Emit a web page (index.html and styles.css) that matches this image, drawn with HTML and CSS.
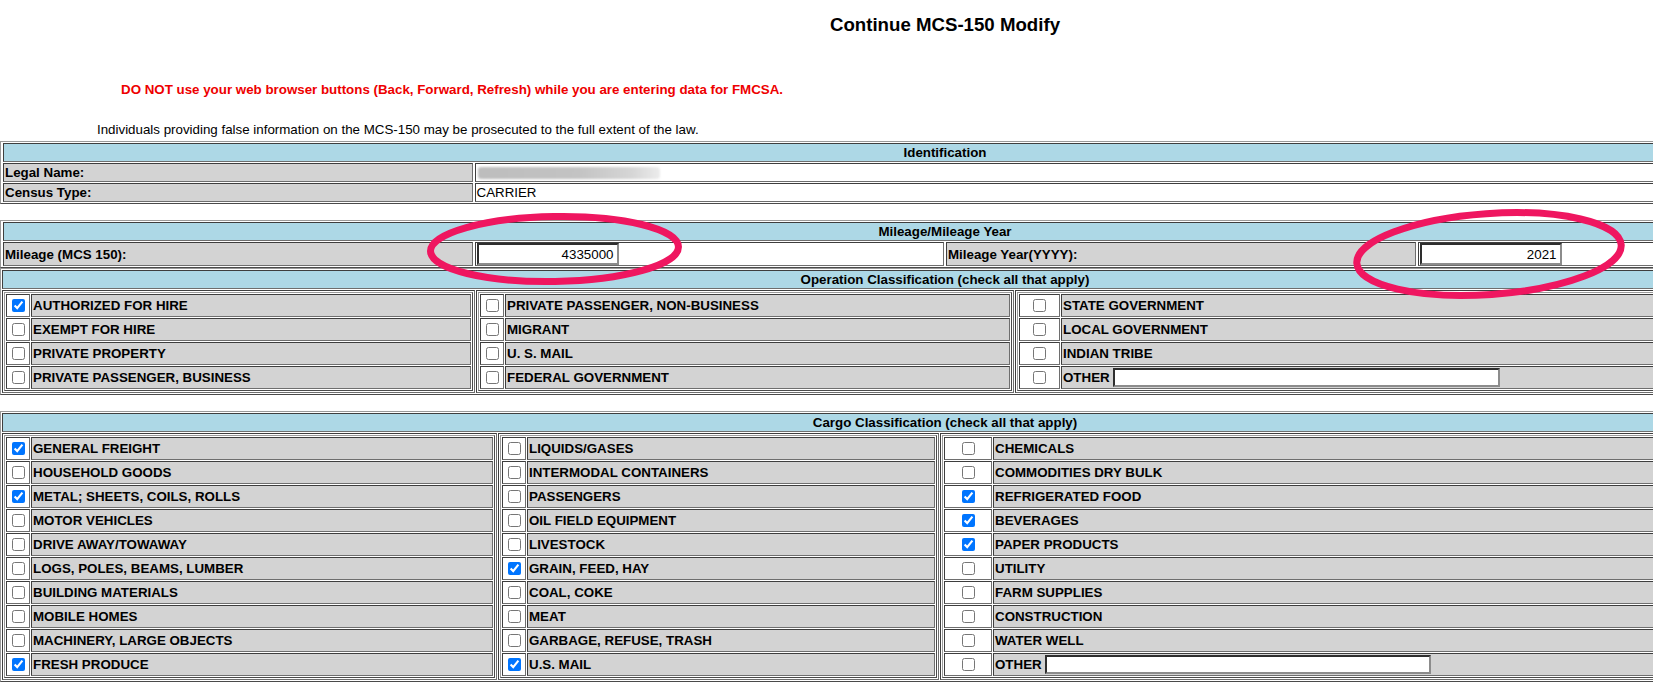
FILE: index.html
```html
<!DOCTYPE html>
<html>
<head>
<meta charset="utf-8">
<title>Continue MCS-150 Modify</title>
<link rel="stylesheet" href="styles.css">
</head>
<body>
<div class="page">
  <div class="title">Continue MCS-150 Modify</div>
  <div class="warn">DO NOT use your web browser buttons (Back, Forward, Refresh) while you are entering data for FMCSA.</div>
  <div class="legal">Individuals providing false information on the MCS-150 may be prosecuted to the full extent of the law.</div>

  <table class="sec four">
    <colgroup><col class="q"><col class="q"><col class="q"><col class="q"></colgroup>
    <tr><th colspan="4" class="hd">Identification</th></tr>
    <tr><td class="lbl">Legal Name:</td><td colspan="3" class="val"><span class="blur"></span></td></tr>
    <tr><td class="lbl">Census Type:</td><td colspan="3" class="val">CARRIER</td></tr>
  </table>

  <table class="sec four gap">
    <colgroup><col class="q"><col class="q"><col class="q"><col class="q"></colgroup>
    <tr><th colspan="4" class="hd">Mileage/Mileage Year</th></tr>
    <tr>
      <td class="lbl">Mileage (MCS 150):</td>
      <td class="val inp"><input class="num" type="text" value="4335000"></td>
      <td class="lbl">Mileage Year(YYYY):</td>
      <td class="val inp"><input class="num" type="text" value="2021"></td>
    </tr>
  </table>

  <table class="sec outer">
    <colgroup><col class="op1"><col class="op2"><col class="op3"></colgroup>
    <tr><th colspan="3" class="hd">Operation Classification (check all that apply)</th></tr>
    <tr>
      <td class="box">
        <table class="list">
          <tr><td class="cb"><input type="checkbox" checked></td><td class="opt">AUTHORIZED FOR HIRE</td></tr>
          <tr><td class="cb"><input type="checkbox"></td><td class="opt">EXEMPT FOR HIRE</td></tr>
          <tr><td class="cb"><input type="checkbox"></td><td class="opt">PRIVATE PROPERTY</td></tr>
          <tr><td class="cb"><input type="checkbox"></td><td class="opt">PRIVATE PASSENGER, BUSINESS</td></tr>
        </table>
      </td>
      <td class="box">
        <table class="list">
          <tr><td class="cb"><input type="checkbox"></td><td class="opt">PRIVATE PASSENGER, NON-BUSINESS</td></tr>
          <tr><td class="cb"><input type="checkbox"></td><td class="opt">MIGRANT</td></tr>
          <tr><td class="cb"><input type="checkbox"></td><td class="opt">U. S. MAIL</td></tr>
          <tr><td class="cb"><input type="checkbox"></td><td class="opt">FEDERAL GOVERNMENT</td></tr>
        </table>
      </td>
      <td class="box">
        <table class="list">
          <tr><td class="cb wide-a"><input type="checkbox"></td><td class="opt">STATE GOVERNMENT</td></tr>
          <tr><td class="cb wide-a"><input type="checkbox"></td><td class="opt">LOCAL GOVERNMENT</td></tr>
          <tr><td class="cb wide-a"><input type="checkbox"></td><td class="opt">INDIAN TRIBE</td></tr>
          <tr><td class="cb wide-a"><input type="checkbox"></td><td class="opt">OTHER <input class="txt op-other" type="text"></td></tr>
        </table>
      </td>
    </tr>
  </table>

  <table class="sec outer gap2">
    <colgroup><col class="cg1"><col class="cg2"><col class="cg3"></colgroup>
    <tr><th colspan="3" class="hd">Cargo Classification (check all that apply)</th></tr>
    <tr>
      <td class="box">
        <table class="list">
          <tr><td class="cb"><input type="checkbox" checked></td><td class="opt">GENERAL FREIGHT</td></tr>
          <tr><td class="cb"><input type="checkbox"></td><td class="opt">HOUSEHOLD GOODS</td></tr>
          <tr><td class="cb"><input type="checkbox" checked></td><td class="opt">METAL; SHEETS, COILS, ROLLS</td></tr>
          <tr><td class="cb"><input type="checkbox"></td><td class="opt">MOTOR VEHICLES</td></tr>
          <tr><td class="cb"><input type="checkbox"></td><td class="opt">DRIVE AWAY/TOWAWAY</td></tr>
          <tr><td class="cb"><input type="checkbox"></td><td class="opt">LOGS, POLES, BEAMS, LUMBER</td></tr>
          <tr><td class="cb"><input type="checkbox"></td><td class="opt">BUILDING MATERIALS</td></tr>
          <tr><td class="cb"><input type="checkbox"></td><td class="opt">MOBILE HOMES</td></tr>
          <tr><td class="cb"><input type="checkbox"></td><td class="opt">MACHINERY, LARGE OBJECTS</td></tr>
          <tr><td class="cb"><input type="checkbox" checked></td><td class="opt">FRESH PRODUCE</td></tr>
        </table>
      </td>
      <td class="box">
        <table class="list">
          <tr><td class="cb"><input type="checkbox"></td><td class="opt">LIQUIDS/GASES</td></tr>
          <tr><td class="cb"><input type="checkbox"></td><td class="opt">INTERMODAL CONTAINERS</td></tr>
          <tr><td class="cb"><input type="checkbox"></td><td class="opt">PASSENGERS</td></tr>
          <tr><td class="cb"><input type="checkbox"></td><td class="opt">OIL FIELD EQUIPMENT</td></tr>
          <tr><td class="cb"><input type="checkbox"></td><td class="opt">LIVESTOCK</td></tr>
          <tr><td class="cb"><input type="checkbox" checked></td><td class="opt">GRAIN, FEED, HAY</td></tr>
          <tr><td class="cb"><input type="checkbox"></td><td class="opt">COAL, COKE</td></tr>
          <tr><td class="cb"><input type="checkbox"></td><td class="opt">MEAT</td></tr>
          <tr><td class="cb"><input type="checkbox"></td><td class="opt">GARBAGE, REFUSE, TRASH</td></tr>
          <tr><td class="cb"><input type="checkbox" checked></td><td class="opt">U.S. MAIL</td></tr>
        </table>
      </td>
      <td class="box">
        <table class="list">
          <tr><td class="cb wide-b"><input type="checkbox"></td><td class="opt">CHEMICALS</td></tr>
          <tr><td class="cb wide-b"><input type="checkbox"></td><td class="opt">COMMODITIES DRY BULK</td></tr>
          <tr><td class="cb wide-b"><input type="checkbox" checked></td><td class="opt">REFRIGERATED FOOD</td></tr>
          <tr><td class="cb wide-b"><input type="checkbox" checked></td><td class="opt">BEVERAGES</td></tr>
          <tr><td class="cb wide-b"><input type="checkbox" checked></td><td class="opt">PAPER PRODUCTS</td></tr>
          <tr><td class="cb wide-b"><input type="checkbox"></td><td class="opt">UTILITY</td></tr>
          <tr><td class="cb wide-b"><input type="checkbox"></td><td class="opt">FARM SUPPLIES</td></tr>
          <tr><td class="cb wide-b"><input type="checkbox"></td><td class="opt">CONSTRUCTION</td></tr>
          <tr><td class="cb wide-b"><input type="checkbox"></td><td class="opt">WATER WELL</td></tr>
          <tr><td class="cb wide-b"><input type="checkbox"></td><td class="opt">OTHER <input class="txt cg-other" type="text"></td></tr>
        </table>
      </td>
    </tr>
  </table>

  <svg class="ring ring-a" width="270" height="90" viewBox="0 0 270 90" aria-hidden="true">
    <ellipse cx="134.5" cy="44" rx="124" ry="32.5" fill="none" stroke="#ef1660" stroke-width="7"/>
  </svg>
  <svg class="ring ring-b" width="300" height="118" viewBox="0 0 300 118" aria-hidden="true">
    <ellipse cx="149" cy="59" rx="132.5" ry="40.5" fill="none" stroke="#ef1660" stroke-width="7"/>
  </svg>
</div>
</body>
</html>
```

FILE: styles.css
```css
html, body {
  margin: 0;
  padding: 0;
  background: #fff;
  overflow: hidden;
}

body {
  font-family: "Liberation Sans", Arial, sans-serif;
  font-size: 13.33px;
  color: #000;
}

.page {
  position: relative;
  width: 1890px;
}

.title {
  padding-top: 14px;
  height: 22px;
  line-height: 22px;
  text-align: center;
  font-size: 18.67px;
  font-weight: bold;
}

.warn {
  margin-top: 46px;
  padding-left: 121px;
  line-height: 16px;
  color: #ee0000;
  font-weight: bold;
}

.legal {
  margin-top: 24px;
  padding-left: 97px;
  line-height: 16px;
}

/* section tables */
.sec {
  width: 1890px;
  table-layout: fixed;
  border-collapse: separate;
  border: 1px solid;
  border-color: #9a9a9a #4a4a4a #4a4a4a #9a9a9a;
  margin-top: 3px;
}

.four {
  border-spacing: 2px 1px;
}

.outer {
  border-spacing: 1px;
  margin-top: 0;
}

.gap {
  margin-top: 16px;
}

.gap2 {
  margin-top: 16px;
}

.q { width: 25%; }
.op1 { width: 473px; }
.op2 { width: 538px; }
.op3 { width: 873px; }
.cg1 { width: 495px; }
.cg2 { width: 441px; }
.cg3 { width: 948px; }

.sec > tbody > tr > th,
.sec > tbody > tr > td {
  border: 1px solid;
  border-color: #3e3e3e #6e6e6e #6e6e6e #3e3e3e;
  padding: 1px;
  line-height: 15px;
}

.hd {
  background: #add8e6;
  font-weight: bold;
  text-align: center;
}

.lbl {
  background: #d3d3d3;
  font-weight: bold;
  white-space: nowrap;
  text-align: left;
}

.val {
  background: #fff;
  white-space: nowrap;
}

.sec > tbody > tr > td.inp {
  padding: 0 1px;
}

.blur {
  display: inline-block;
  width: 182px;
  height: 12px;
  margin-left: 1px;
  vertical-align: middle;
  border-radius: 3px;
  background: linear-gradient(90deg, #bdbdbd 0%, #c3c3c3 55%, #d6d6d6 85%, #ececec 100%);
  filter: blur(1px);
}

.num {
  display: block;
  box-sizing: border-box;
  width: 142px;
  height: 22px;
  margin: 0;
  padding: 0 3px;
  border-width: 2px;
  border-style: solid;
  border-color: #2e2e2e #8c8c8c #8c8c8c #2e2e2e;
  background: #fff;
  font-family: "Liberation Sans", Arial, sans-serif;
  font-size: 13.33px;
  color: #000;
  text-align: right;
}

.sec > tbody > tr > td.box {
  padding: 1px;
  vertical-align: top;
  background: #fff;
}

/* nested option lists */
.list {
  width: 100%;
  border-collapse: separate;
  border-spacing: 1px;
  border: 1px solid;
  border-color: #9a9a9a #4a4a4a #4a4a4a #9a9a9a;
}

.list td {
  border: 1px solid;
  border-color: #3e3e3e #6e6e6e #6e6e6e #3e3e3e;
  padding: 1px;
}

.list .cb {
  width: 1px;
  background: #fff;
}

.list .cb input {
  display: block;
  margin: 3px 3px 3px 4px;
}

.list .wide-a {
  box-sizing: border-box;
  width: 41px;
}

.list .wide-b {
  box-sizing: border-box;
  width: 48px;
}

.list .wide-a input,
.list .wide-b input {
  margin: 3px auto;
}

.list .opt {
  background: #d3d3d3;
  font-weight: bold;
  line-height: 19px;
  height: 19px;
  white-space: nowrap;
}

.txt {
  box-sizing: border-box;
  height: 19px;
  margin: 0;
  padding: 0 2px;
  vertical-align: top;
  border-width: 2px;
  border-style: solid;
  border-color: #2e2e2e #8c8c8c #8c8c8c #2e2e2e;
  background: #fff;
  font-family: "Liberation Sans", Arial, sans-serif;
  font-size: 13.33px;
}

.op-other { width: 387px; }
.cg-other { width: 386px; }

/* annotation rings drawn over the form */
.ring {
  position: absolute;
  pointer-events: none;
}

.ring-a {
  left: 420px;
  top: 205px;
  transform: rotate(-1deg);
}

.ring-b {
  left: 1340px;
  top: 195px;
  transform: rotate(-4deg);
}
```
